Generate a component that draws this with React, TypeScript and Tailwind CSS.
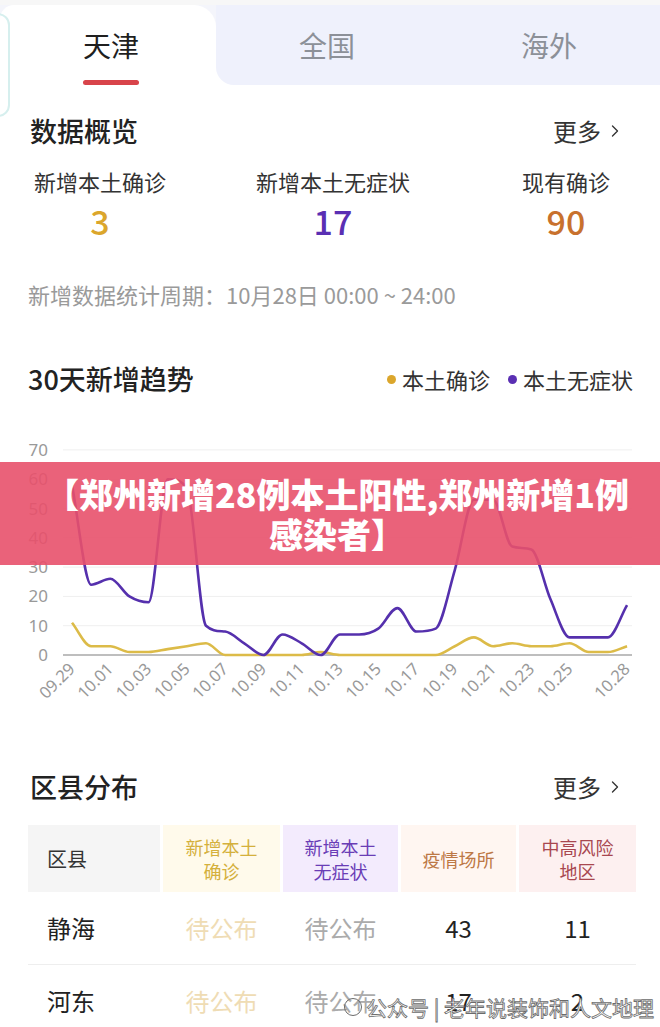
import React from 'react';
import { ChevronRight } from 'lucide-react';

const confirmed = [11, 3, 3, 1, 1, 2, 3, 4, 0, 0, 0, 0, 0, 1, 0, 0, 0, 0, 0, 0, 3, 6, 3, 4, 3, 3, 4, 1, 1, 3];
const asymptomatic = [58, 24, 26, 20, 18, 60, 57, 10, 8, 4, 0, 7, 4, 0, 7, 7, 9, 16, 8, 9, 29, 53, 53, 37, 36, 19, 6, 6, 6, 17];

const xLabels: [number, string][] = [
  [0, '09.29'], [2, '10.01'], [4, '10.03'], [6, '10.05'], [8, '10.07'], [10, '10.09'], [12, '10.11'],
  [14, '10.13'], [16, '10.15'], [18, '10.17'], [20, '10.19'], [22, '10.21'], [24, '10.23'], [26, '10.25'], [29, '10.28'],
];

const px = (d: number) => 72 + d * 19.14;
const py = (v: number) => 215 - v * 2.93;

// monotone cubic so the curve doesn't overshoot below zero
function smoothPath(values: number[]) {
  const pts = values.map((v, i) => [px(i), py(v)]);
  const n = pts.length;
  const m: number[] = [];
  for (let i = 0; i < n - 1; i++) {
    m.push((pts[i + 1][1] - pts[i][1]) / (pts[i + 1][0] - pts[i][0]));
  }
  const t: number[] = [m[0]];
  for (let i = 1; i < n - 1; i++) {
    t.push(m[i - 1] * m[i] <= 0 ? 0 : (m[i - 1] + m[i]) / 2);
  }
  t.push(m[n - 2]);
  for (let i = 0; i < n - 1; i++) {
    if (m[i] === 0) {
      t[i] = 0;
      t[i + 1] = 0;
      continue;
    }
    const a = t[i] / m[i];
    const b = t[i + 1] / m[i];
    const s = a * a + b * b;
    if (s > 9) {
      const k = 3 / Math.sqrt(s);
      t[i] = k * a * m[i];
      t[i + 1] = k * b * m[i];
    }
  }
  let d = `M${pts[0][0]},${pts[0][1]}`;
  for (let i = 0; i < n - 1; i++) {
    const dx = (pts[i + 1][0] - pts[i][0]) / 3;
    d += ` C${pts[i][0] + dx},${pts[i][1] + t[i] * dx} ${pts[i + 1][0] - dx},${pts[i + 1][1] - t[i + 1] * dx} ${pts[i + 1][0]},${pts[i + 1][1]}`;
  }
  return d;
}

const TrendChart = () => (
  <svg width="660" height="280" viewBox="0 0 660 280" className="block overflow-visible">
    {[10, 20, 30, 40, 50, 60, 70].map(v => (
      <line key={v} x1="63" x2="632" y1={py(v)} y2={py(v)} stroke="#efefef" strokeWidth="1" />
    ))}
    <line x1="63" x2="632" y1={py(0)} y2={py(0)} stroke="#a8a8a8" strokeWidth="1.5" />
    {[0, 10, 20, 30, 40, 50, 60, 70].map(v => (
      <text key={v} x="48" y={py(v) + 6} textAnchor="end" fontSize="17" fill="#999" fontFamily="Noto Sans, sans-serif">
        {v}
      </text>
    ))}
    {xLabels.map(([d, label]) => (
      <text
        key={label}
        x={px(d) + 4}
        y="230"
        textAnchor="end"
        fontSize="16.5"
        fill="#999"
        fontFamily="Noto Sans, sans-serif"
        transform={`rotate(-45 ${px(d) + 4} 230)`}
      >
        {label}
      </text>
    ))}
    <path d={smoothPath(confirmed)} fill="none" stroke="#dcbb48" strokeWidth="2.6" strokeLinejoin="round" />
    <path d={smoothPath(asymptomatic)} fill="none" stroke="#5530ad" strokeWidth="2.6" strokeLinejoin="round" />
  </svg>
);

const MoreLink = () => (
  <span className="flex items-center text-[24px] leading-[32px] text-[#333]">
    更多
    <ChevronRight size={20} strokeWidth={1.6} className="ml-[4px]" />
  </span>
);

const rows = [
  { name: '静海', a: '待公布', b: '待公布', c: '43', d: '11' },
  { name: '河东', a: '待公布', b: '待公布', c: '17', d: '2' },
];

export default function App() {
  return (
    <div className="relative w-[660px] h-[1027px] overflow-hidden bg-white font-['Noto_Sans_CJK_SC','Noto_Sans',sans-serif]">
      {/* left edge card outline */}
      <div className="absolute left-[-22px] top-[13px] w-[32px] h-[104px] rounded-[12px] border-2 border-[#d6efee]" />

      {/* Tabs */}
      <div className="h-[5px] bg-[#f7f7f7]" />
      <div className="flex h-[80px]">
        <div className="w-[216px] bg-[#f4f5fb]">
          <div className="h-full bg-white rounded-tl-[14px] rounded-tr-[22px] flex flex-col items-center pl-[6px] pt-[23px]">
            <span className="text-[28px] leading-[34px] text-[#1f1f1f]">天津</span>
            <span className="mt-[18px] w-[56px] h-[6px] rounded-full bg-[#d8444a]" />
          </div>
        </div>
        <div className="flex-1 bg-white">
          <div className="h-full bg-[#eff1fc] rounded-bl-[18px] flex">
            <div className="flex-1 flex justify-center pt-[23px]">
              <span className="text-[28px] leading-[34px] text-[#8c9098]">全国</span>
            </div>
            <div className="flex-1 flex justify-center pt-[23px]">
              <span className="text-[28px] leading-[34px] text-[#8c9098]">海外</span>
            </div>
          </div>
        </div>
      </div>

      {/* Overview */}
      <div className="mt-[30px] pl-[30px] pr-[35px] flex justify-between items-center">
        <h2 className="text-[27px] leading-[32px] font-medium text-[#222]">数据概览</h2>
        <MoreLink />
      </div>
      <div className="mt-[20px] pl-[20px] pr-[14px] flex justify-between">
        <div className="w-[160px] flex flex-col items-center">
          <span className="text-[22px] leading-[28px] text-[#333] whitespace-nowrap">新增本土确诊</span>
          <span className="mt-[6px] text-[34px] leading-[40px] font-medium text-[#dba62c]">3</span>
        </div>
        <div className="w-[160px] flex flex-col items-center">
          <span className="text-[22px] leading-[28px] text-[#333] whitespace-nowrap">新增本土无症状</span>
          <span className="mt-[6px] text-[34px] leading-[40px] font-medium text-[#5a2fb3]">17</span>
        </div>
        <div className="w-[160px] flex flex-col items-center">
          <span className="text-[22px] leading-[28px] text-[#333]">现有确诊</span>
          <span className="mt-[6px] text-[34px] leading-[40px] font-medium text-[#c8712d]">90</span>
        </div>
      </div>
      <p className="mt-[40px] pl-[28px] text-[22px] leading-[26px] text-[#9a9a9a] whitespace-nowrap">
        新增数据统计周期：10月28日 00:00 ~ 24:00
      </p>

      {/* Trend */}
      <div className="mt-[56px] pl-[28px] pr-[27px] flex justify-between items-center">
        <h2 className="text-[27px] leading-[32px] font-medium text-[#222]">30天新增趋势</h2>
        <div className="flex items-center text-[22px] leading-[28px] text-[#333]">
          <span className="w-[9px] h-[9px] rounded-full bg-[#dba62c] mr-[6px]" />
          本土确诊
          <span className="w-[9px] h-[9px] rounded-full bg-[#5a2fb3] ml-[18px] mr-[6px]" />
          本土无症状
        </div>
      </div>
      <div className="mt-[45px]">
        <TrendChart />
      </div>

      {/* District */}
      <div className="mt-[51px] pl-[30px] pr-[35px] flex justify-between items-center">
        <h2 className="text-[27px] leading-[32px] font-medium text-[#222]">区县分布</h2>
        <MoreLink />
      </div>
      <div className="mt-[22px] ml-[28px] w-[608px]">
        <div className="grid grid-cols-[132px_117px_115px_115px_117px] gap-x-[3px] h-[67px] text-[18px] leading-[24px]">
          <div className="bg-[#f5f5f5] flex items-center pl-[19px] text-[20px] text-[#333]">区县</div>
          <div className="bg-[#fffaeb] flex items-center justify-center text-center text-[#d4b03c]">新增本土<br />确诊</div>
          <div className="bg-[#f3ebfd] flex items-center justify-center text-center text-[#6a3db6]">新增本土<br />无症状</div>
          <div className="bg-[#fff6f1] flex items-center justify-center text-[#bd7845]">疫情场所</div>
          <div className="bg-[#fdf0f0] flex items-center justify-center text-center text-[#a8474f]">中高风险<br />地区</div>
        </div>
        {rows.map(r => (
          <div
            key={r.name}
            className="grid grid-cols-[132px_117px_115px_115px_117px] gap-x-[3px] h-[73px] items-center border-b border-[#eeeeee] text-[24px]"
          >
            <span className="pl-[19px] text-[#222]">{r.name}</span>
            <span className="text-center text-[#efdcb4]">{r.a}</span>
            <span className="text-center text-[#ababab]">{r.b}</span>
            <span className="text-center text-[#222]">{r.c}</span>
            <span className="text-center text-[#222]">{r.d}</span>
          </div>
        ))}
      </div>

      {/* Headline banner over chart */}
      <div className="absolute left-0 top-[462px] w-full h-[103px] bg-[#e8516b]/90 flex items-center justify-center pl-[14px]">
        <p className="text-center text-white font-black text-[34px] leading-[40px] whitespace-nowrap">
          【郑州新增28例本土阳性,郑州新增1例
          <br />
          感染者】
        </p>
      </div>

      {/* watermark */}
      <div className="absolute right-[6px] bottom-[6px] flex items-center text-[21px] leading-[28px] text-white [-webkit-text-stroke:0.8px_#6b6b6b]">
        <span className="w-[18px] h-[18px] rounded-full border-[1.5px] border-[#6b6b6b] mr-[4px]" />
        公众号 | 老年说装饰和人文地理
      </div>
    </div>
  );
}
